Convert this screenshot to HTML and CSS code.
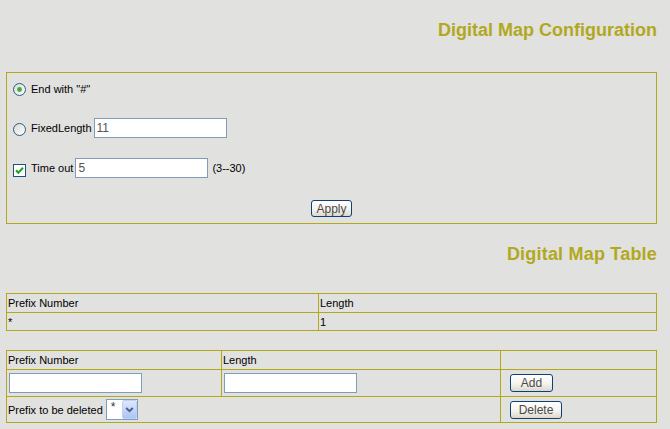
FILE: index.html
```html
<!DOCTYPE html>
<html>
<head>
<meta charset="utf-8">
<title>Digital Map</title>
<link rel="stylesheet" href="styles.css">
</head>
<body>
<div class="page">
  <h1 class="title t1">Digital Map Configuration</h1>
  <div class="config">
    <div class="row r1">
      <span class="radio"><svg width="13" height="13" viewBox="0 0 13 13"><defs><linearGradient id="rg1" x1="0" y1="0" x2="1" y2="1"><stop offset="0" stop-color="#d8d8d0"/><stop offset="1" stop-color="#ffffff"/></linearGradient></defs><circle cx="6.5" cy="6.5" r="6" fill="url(#rg1)" stroke="#2a5a88"/><circle cx="6.5" cy="6.5" r="2.4" fill="#36b236"/></svg></span>
      <span class="lbl">End with "#"</span>
    </div>
    <div class="row r2">
      <span class="radio"><svg width="13" height="13" viewBox="0 0 13 13"><defs><linearGradient id="rg2" x1="0" y1="0" x2="1" y2="1"><stop offset="0" stop-color="#d8d8d0"/><stop offset="1" stop-color="#ffffff"/></linearGradient></defs><circle cx="6.5" cy="6.5" r="6" fill="url(#rg2)" stroke="#2a5a88"/></svg></span>
      <span class="lbl">FixedLength</span>
      <input class="txt in-fixed" type="text" value="11">
    </div>
    <div class="row r3">
      <span class="check"><svg width="13" height="13" viewBox="0 0 13 13"><rect x="0.5" y="0.5" width="12" height="12" fill="#ffffff" stroke="#1c5180"/><path d="M3 6.3 L5.3 8.8 L10 3.8" fill="none" stroke="#21a121" stroke-width="2"/></svg></span>
      <span class="lbl">Time out</span>
      <input class="txt in-time" type="text" value="5">
      <span class="lbl range">(3--30)</span>
    </div>
    <div class="row actions">
      <button class="btn b-apply" type="button">Apply</button>
    </div>
  </div>

  <h2 class="title t2">Digital Map Table</h2>

  <table class="grid g1">
    <colgroup><col class="c1-1"><col></colgroup>
    <tr class="h18"><td>Prefix Number</td><td>Length</td></tr>
    <tr class="h17"><td>*</td><td>1</td></tr>
  </table>

  <table class="grid g2">
    <colgroup><col class="c2-1"><col class="c2-2"><col></colgroup>
    <tr class="h18"><td>Prefix Number</td><td>Length</td><td></td></tr>
    <tr class="h26">
      <td class="pad"><input class="txt" type="text"></td>
      <td class="pad"><input class="txt" type="text"></td>
      <td class="btncell"><button class="btn b-add" type="button">Add</button></td>
    </tr>
    <tr class="h25">
      <td colspan="2">
        <div class="delrow">
          <span>Prefix to be deleted</span>
          <span class="sel"><span class="sel-val">*</span><span class="sel-arrow"><svg width="15" height="19" viewBox="0 0 15 19"><defs><linearGradient id="ag" x1="0" y1="0" x2="0" y2="1"><stop offset="0" stop-color="#e0e9fe"/><stop offset="1" stop-color="#aac2f6"/></linearGradient></defs><rect x="0.5" y="0.5" width="14" height="18" rx="1.5" fill="url(#ag)" stroke="#c0d0f4"/><path d="M4.2 8 L7.5 11.2 L10.8 8" fill="none" stroke="#4d6185" stroke-width="2"/></svg></span></span>
        </div>
      </td>
      <td class="btncell"><button class="btn b-del" type="button">Delete</button></td>
    </tr>
  </table>
</div>
</body>
</html>
```
FILE: styles.css
```css
body {
  margin: 0;
  background: #e1e1df;
  font-family: "Liberation Sans", Arial, sans-serif;
  font-size: 11px;
  color: #000;
}

.page {
  width: 651px;
  margin-left: 6px;
}

.title {
  margin: 0;
  font-size: 18px;
  line-height: 22px;
  font-weight: bold;
  color: #b2a81e;
  text-align: right;
}

.t1 {
  padding-top: 19px;
}

.t2 {
  margin-top: 19px;
  letter-spacing: 0.2px;
}

.config {
  margin-top: 31px;
  border: 1px solid #b3a71c;
  padding: 0 0 6px 6px;
}

.row {
  display: flex;
  align-items: center;
  height: 20px;
}

.r1 { margin-top: 6px; }
.r2 { margin-top: 19px; }
.r3 { margin-top: 20px; }

.actions {
  margin-top: 22px;
  height: 17px;
  justify-content: center;
  padding-right: 6px;
}

.radio, .check {
  display: block;
  width: 13px;
  height: 13px;
  margin-right: 5px;
}

.radio svg, .check svg {
  display: block;
}

.r2 .radio { margin-top: 2px; }
.check { margin-top: 5px; }

.lbl {
  white-space: nowrap;
}

.txt {
  box-sizing: border-box;
  width: 133px;
  height: 20px;
  border: 1px solid #7f9db9;
  background: #fff;
  font-family: "Liberation Sans", Arial, sans-serif;
  font-size: 12px;
  color: #555;
  padding: 0 2px;
  margin: 0;
  outline: none;
}

.in-fixed { margin-left: 2px; }
.in-time { margin-left: 2px; }
.range { margin-left: 4px; }

.btn {
  box-sizing: border-box;
  height: 18px;
  margin: 0;
  padding: 0;
  border: 1px solid #0f3f73;
  border-radius: 3px;
  background: linear-gradient(#ffffff, #f4f3ee 55%, #dcd8cc);
  font-family: "Liberation Sans", Arial, sans-serif;
  font-size: 12px;
  color: #4a4a4a;
  line-height: 14px;
}

.b-apply { width: 41px; height: 17px; }
.b-add { width: 43px; }
.b-del { width: 52px; }

.grid {
  width: 651px;
  border-collapse: collapse;
  table-layout: fixed;
}

.grid td {
  border: 1px solid #b3a71c;
  padding: 0 1px;
  vertical-align: middle;
  white-space: nowrap;
}

.g1 { margin-top: 28px; }
.g2 { margin-top: 19px; }

.c1-1 { width: 312px; }
.c2-1 { width: 215px; }
.c2-2 { width: 279px; }

.h18 td { height: 18px; }
.h17 td { height: 17px; }
.h26 td { height: 26px; }
.h25 td { height: 25px; }

.grid td.pad {
  padding-left: 2px;
}

.grid td.pad .txt {
  display: block;
}

.grid td.btncell {
  padding-left: 9px;
}

.btncell .btn {
  display: block;
}

.delrow {
  display: flex;
  align-items: center;
}

.sel {
  box-sizing: border-box;
  display: flex;
  width: 32px;
  height: 21px;
  margin-left: 3px;
  border: 1px solid #7f9db9;
  background: #fff;
}

.sel-val {
  flex: 1;
  font-size: 12px;
  line-height: 14px;
  padding-left: 4px;
  color: #333;
}

.sel-arrow {
  width: 15px;
  height: 19px;
}

.sel-arrow svg {
  display: block;
}
```
